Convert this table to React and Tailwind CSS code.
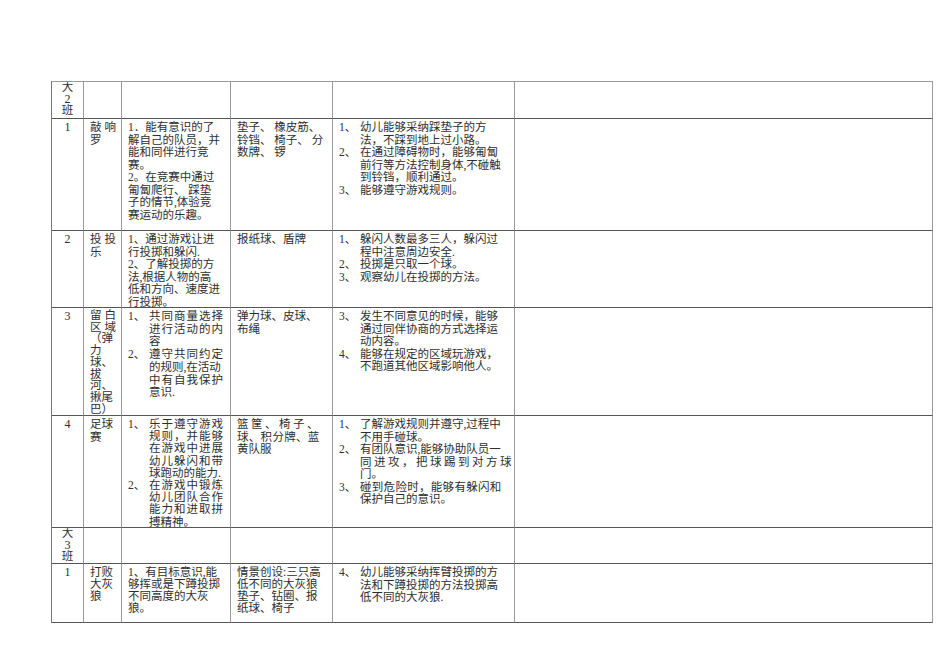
import React from "react";

const FONT = "font-['Liberation_Serif','Noto_Sans_CJK_SC',serif]";

function Cell({ children, className = "" }) {
  return (
    <div className={`border-r border-b border-r-[#9a9a9a] border-b-[#555] overflow-hidden ${className}`}>
      {children}
    </div>
  );
}

// plain lines, wrapping copied from the document
function Lines({ lines, className = "" }) {
  return (
    <div className={`pl-[6px] pt-[2px] ${className}`}>
      {lines.map((l, i) =>
        typeof l === "string" ? (
          <div key={i} className="whitespace-pre">{l}</div>
        ) : (
          <div key={i} className={`whitespace-pre ${l.c}`}>{l.t}</div>
        )
      )}
    </div>
  );
}

// numbered list with hanging indent
function Items({ items, className = "" }) {
  return (
    <div className={`pl-[6px] pt-[2px] ${className}`}>
      {items.map(([label, lines], i) => (
        <div key={i} className="flex">
          <span className="w-[21px] shrink-0">{label}</span>
          <div>
            {lines.map((l, j) =>
              typeof l === "string" ? (
                <div key={j} className="whitespace-pre">{l}</div>
              ) : (
                <div key={j} className={`whitespace-pre ${l.c}`}>{l.t}</div>
              )
            )}
          </div>
        </div>
      ))}
    </div>
  );
}

function ClassHead({ n }) {
  return (
    <>
      <Cell className="flex flex-col items-center leading-[11.7px]">
        <span>大</span>
        <span className="text-[12px]">{n}</span>
        <span>班</span>
      </Cell>
      <Cell />
      <Cell />
      <Cell />
      <Cell />
      <Cell />
    </>
  );
}

function Num({ n }) {
  return <Cell className="text-center pt-[2px] text-[12px]">{n}</Cell>;
}

export default function App() {
  return (
    <div className={`w-[950px] h-[672px] bg-white ${FONT} text-[11.5px] leading-[12.5px] text-[#2e2e2e]`}>
      <div className="pt-[81px] pl-[51px]">
        <div className="grid w-[882px] grid-cols-[32px_38px_109px_102px_182px_418px] grid-rows-[37px_112px_77px_108px_112px_36px_59px] border-l border-t border-l-[#777] border-t-[#999]">
          <ClassHead n="2" />

          {/* 敲响罗 */}
          <Num n="1" />
          <Cell>
            <Lines lines={[{ t: "敲响", c: "tracking-[3px]" }, "罗"]} className="pl-[5px]" />
          </Cell>
          <Cell>
            <Lines
              lines={[
                "1．能有意识的了",
                "解自己的队员，并",
                "能和同伴进行竞",
                "赛。",
                "2。在竞赛中通过",
                "匍匐爬行、 踩垫",
                "子的情节,体验竞",
                "赛运动的乐趣。",
              ]}
            />
          </Cell>
          <Cell>
            <Lines lines={["垫子、 橡皮筋、", "铃铛、 椅子、 分", "数牌、 锣"]} className="pl-[5px]" />
          </Cell>
          <Cell>
            <Items
              items={[
                ["1、", ["幼儿能够采纳踩垫子的方", "法，不踩到地上过小路。"]],
                ["2、", ["在通过障碍物时，能够匍匐", "前行等方法控制身体,不碰触", "到铃铛，顺利通过。"]],
                ["3、", ["能够遵守游戏规则。"]],
              ]}
            />
          </Cell>
          <Cell />

          {/* 投投乐 */}
          <Num n="2" />
          <Cell>
            <Lines lines={[{ t: "投投", c: "tracking-[3px]" }, "乐"]} className="pl-[5px]" />
          </Cell>
          <Cell>
            <Lines
              lines={[
                "1、通过游戏让进",
                "行投掷和躲闪.",
                "2、了解投掷的方",
                "法,根据人物的高",
                "低和方向、速度进",
                "行投掷。",
              ]}
            />
          </Cell>
          <Cell>
            <Lines lines={["报纸球、盾牌"]} className="pl-[5px]" />
          </Cell>
          <Cell>
            <Items
              items={[
                ["1、", ["躲闪人数最多三人，躲闪过", "程中注意周边安全."]],
                ["2、", ["投掷是只取一个球。"]],
                ["3、", ["观察幼儿在投掷的方法。"]],
              ]}
            />
          </Cell>
          <Cell />

          {/* 留白区域 */}
          <Num n="3" />
          <Cell>
            <Lines
              lines={[
                { t: "留白", c: "tracking-[3px]" },
                { t: "区域", c: "tracking-[3px]" },
                "（弹",
                "力",
                "球、",
                "拔",
                "河、",
                "揪尾",
                "巴）",
              ]}
              className="pl-[3px] leading-[11.7px]"
            />
          </Cell>
          <Cell>
            <Items
              items={[
                ["1、", [{ t: "共同商量选择", c: "tracking-[1px]" }, { t: "进行活动的内", c: "tracking-[1px]" }, "容"]],
                ["2、", [{ t: "遵守共同约定", c: "tracking-[1px]" }, "的规则,在活动", { t: "中有自我保护", c: "tracking-[1px]" }, "意识."]],
              ]}
              className="leading-[12.7px]"
            />
          </Cell>
          <Cell>
            <Lines lines={["弹力球、皮球、", "布绳"]} className="pl-[5px]" />
          </Cell>
          <Cell>
            <Items
              items={[
                ["3、", ["发生不同意见的时候，能够", "通过同伴协商的方式选择运", "动内容。"]],
                ["4、", ["能够在规定的区域玩游戏，", "不跑道其他区域影响他人。"]],
              ]}
            />
          </Cell>
          <Cell />

          {/* 足球赛 */}
          <Num n="4" />
          <Cell>
            <Lines lines={["足球", "赛"]} className="pl-[5px]" />
          </Cell>
          <Cell>
            <Items
              items={[
                [
                  "1、",
                  [
                    { t: "乐于遵守游戏", c: "tracking-[1px]" },
                    { t: "规则，并能够", c: "tracking-[1px]" },
                    { t: "在游戏中进展", c: "tracking-[1px]" },
                    { t: "幼儿躲闪和带", c: "tracking-[1px]" },
                    "球跑动的能力.",
                  ],
                ],
                [
                  "2、",
                  [
                    { t: "在游戏中锻炼", c: "tracking-[1px]" },
                    { t: "幼儿团队合作", c: "tracking-[1px]" },
                    { t: "能力和进取拼", c: "tracking-[1px]" },
                    "搏精神。",
                  ],
                ],
              ]}
              className="leading-[12.2px] pt-[1px]"
            />
          </Cell>
          <Cell>
            <Lines
              lines={[{ t: "篮筐、椅子、", c: "tracking-[2.5px]" }, { t: "球、积分牌、蓝", c: "tracking-[0.3px]" }, "黄队服"]}
              className="pl-[5px]"
            />
          </Cell>
          <Cell>
            <Items
              items={[
                ["1、", ["了解游戏规则并遵守,过程中", "不用手碰球。"]],
                ["2、", ["有团队意识,能够协助队员一", { t: "同进攻，把球踢到对方球", c: "tracking-[2.5px]" }, "门。"]],
                ["3、", [{ t: "碰到危险时，能够有躲闪和", c: "tracking-[0.3px]" }, "保护自己的意识。"]],
              ]}
            />
          </Cell>
          <Cell />

          <ClassHead n="3" />

          {/* 打败大灰狼 */}
          <Num n="1" />
          <Cell>
            <Lines lines={["打败", "大灰", "狼"]} className="pl-[5px] leading-[12px]" />
          </Cell>
          <Cell>
            <Lines lines={["1、有目标意识,能", "够挥或是下蹲投掷", "不同高度的大灰", "狼。"]} className="leading-[12px]" />
          </Cell>
          <Cell>
            <Lines
              lines={["情景创设:三只高", "低不同的大灰狼", "垫子、钻圈、报", "纸球、椅子"]}
              className="pl-[5px] leading-[12px]"
            />
          </Cell>
          <Cell>
            <Items items={[["4、", ["幼儿能够采纳挥臂投掷的方", "法和下蹲投掷的方法投掷高", "低不同的大灰狼."]]]} />
          </Cell>
          <Cell />
        </div>
      </div>
    </div>
  );
}
